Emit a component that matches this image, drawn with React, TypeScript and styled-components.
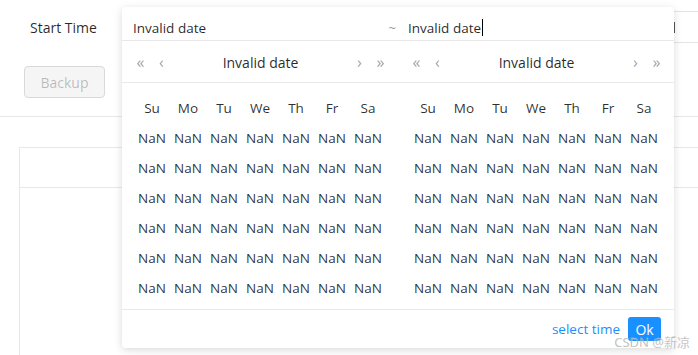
import React from "react";
import styled, { createGlobalStyle } from "styled-components";

const weekDays = ["Su", "Mo", "Tu", "We", "Th", "Fr", "Sa"];
const rows = Array.from({ length: 6 }, () => Array(7).fill("NaN"));

const GlobalStyle = createGlobalStyle`
  html, body {
    margin: 0;
    padding: 0;
    background: #fff;
    overflow: hidden;
  }
  body {
    font-family: "Open Sans", "Noto Sans", sans-serif;
    font-size: 13.5px;
    color: rgba(0, 0, 0, 0.85);
  }
`;

const App = () => {
  return (
    <Page>
      <GlobalStyle />
      <FormRow>
        <Label>Start Time</Label>
        <RangeInput>
          <InputGlyph />
        </RangeInput>
      </FormRow>
      <ActionRow>
        <DisabledButton disabled>Backup</DisabledButton>
      </ActionRow>
      <Divider />
      <TableBox>
        <TableHead />
        <TableBody />
      </TableBox>

      <Watermark>28929 28929</Watermark>

      <Dropdown>
        <InputRow>
          <InputHalf>
            Invalid date
            <Tilde>~</Tilde>
          </InputHalf>
          <InputHalf $right>
            Invalid date
            <Caret />
          </InputHalf>
        </InputRow>
        <Panels>
          {[0, 1].map((p) => (
            <Panel key={p}>
              <PanelHeader>
                <NavGroup>
                  <NavBtn>«</NavBtn>
                  <NavBtn>‹</NavBtn>
                </NavGroup>
                <HeaderTitle>Invalid date</HeaderTitle>
                <NavGroup $end>
                  <NavBtn>›</NavBtn>
                  <NavBtn>»</NavBtn>
                </NavGroup>
              </PanelHeader>
              <Grid>
                {weekDays.map((d) => (
                  <Cell key={d}>{d}</Cell>
                ))}
                {rows.map((r, i) =>
                  r.map((c, j) => <Cell key={`${i}-${j}`}>{c}</Cell>)
                )}
              </Grid>
            </Panel>
          ))}
        </Panels>
        <Footer>
          <TimeLink>select time</TimeLink>
          <OkButton>Ok</OkButton>
        </Footer>
      </Dropdown>

      <CsdnMark>CSDN @新凉</CsdnMark>
    </Page>
  );
};

const Page = styled.div`
  position: relative;
  width: 698px;
  height: 355px;
  overflow: hidden;
`;

const FormRow = styled.div`
  display: flex;
  align-items: center;
  padding: 11px 0 0 30px;
  height: 32px;
`;

const Label = styled.span`
  flex: 0 0 92px;
  font-size: 14px;
`;

const RangeInput = styled.div`
  position: relative;
  box-sizing: border-box;
  height: 32px;
  flex: 0 0 600px;
  border: 1px solid #e4e4e4;
  border-radius: 4px;
`;

const InputGlyph = styled.span`
  position: absolute;
  left: 551px;
  top: 10px;
  width: 1px;
  height: 11px;
  background: #555;
`;

const ActionRow = styled.div`
  display: flex;
  padding: 23px 0 0 24px;
`;

const DisabledButton = styled.button`
  box-sizing: border-box;
  width: 81px;
  height: 32px;
  border: 1px solid #d9d9d9;
  border-radius: 4px;
  background: #f5f5f5;
  color: rgba(0, 0, 0, 0.25);
  font-family: inherit;
  font-size: 14px;
  padding: 0;
`;

const Divider = styled.div`
  margin-top: 18px;
  height: 1px;
  background: #e8e8e8;
`;

const TableBox = styled.div`
  margin: 30px 0 0 19px;
  width: 720px;
  height: 240px;
  border: 1px solid #e8e8e8;
  border-right: none;
`;

const TableHead = styled.div`
  height: 39px;
  border-bottom: 1px solid #e8e8e8;
`;

const TableBody = styled.div`
  height: 200px;
`;

const Watermark = styled.div`
  position: absolute;
  left: 20px;
  top: 300px;
  transform: rotate(-45deg);
  transform-origin: left top;
  font-size: 28px;
  letter-spacing: 3px;
  color: rgba(0, 0, 0, 0.02);
  white-space: nowrap;
  pointer-events: none;
  z-index: 3;
`;

const Dropdown = styled.div`
  position: absolute;
  left: 122px;
  top: 7px;
  width: 552px;
  background: #fff;
  border-radius: 4px;
  box-shadow: 0 2px 8px rgba(0, 0, 0, 0.15);
  z-index: 2;
`;

const InputRow = styled.div`
  display: grid;
  grid-template-columns: 1fr 1fr;
  height: 34px;
  padding-top: 8px;
  box-sizing: border-box;
  border-bottom: 1px solid #e8e8e8;
`;

const InputHalf = styled.div<{ $right?: boolean }>`
  position: relative;
  display: flex;
  align-items: center;
  padding-left: ${(p) => (p.$right ? "10px" : "11px")};
  color: rgba(0, 0, 0, 0.85);
`;

const Tilde = styled.span`
  position: absolute;
  right: 2px;
  color: rgba(0, 0, 0, 0.45);
  font-size: 13px;
`;

const Caret = styled.span`
  display: inline-block;
  width: 1px;
  height: 17px;
  margin-left: 1px;
  background: #000;
`;

const Panels = styled.div`
  display: grid;
  grid-template-columns: 1fr 1fr;
`;

const Panel = styled.div`
  display: flex;
  flex-direction: column;
`;

const PanelHeader = styled.div`
  display: flex;
  align-items: center;
  justify-content: space-between;
  height: 40px;
  padding: 1px 11px 0 12px;
  border-bottom: 1px solid #e8e8e8;
`;

const NavGroup = styled.div<{ $end?: boolean }>`
  display: flex;
  justify-content: ${(p) => (p.$end ? "flex-end" : "flex-start")};
  gap: 8px;
  width: 36px;
`;

const NavBtn = styled.span`
  width: 13px;
  text-align: center;
  font-size: 16px;
  color: rgba(0, 0, 0, 0.4);
  line-height: 1;
`;

const HeaderTitle = styled.span`
  color: rgba(0, 0, 0, 0.85);
  font-size: 14px;
`;

const Grid = styled.div`
  display: grid;
  grid-template-columns: repeat(7, 36px);
  grid-auto-rows: 30px;
  padding: 10px 12px 6px;
`;

const Cell = styled.div`
  display: flex;
  align-items: center;
  justify-content: center;
  color: rgba(0, 0, 0, 0.82);
`;

const Footer = styled.div`
  display: flex;
  align-items: center;
  justify-content: flex-end;
  gap: 8px;
  height: 38px;
  padding-right: 13px;
  border-top: 1px solid #e8e8e8;
`;

const TimeLink = styled.span`
  color: #1890ff;
`;

const OkButton = styled.button`
  width: 33px;
  height: 24px;
  border: none;
  border-radius: 3px;
  background: #1890ff;
  color: #fff;
  font-family: inherit;
  font-size: 14px;
  padding: 0;
`;

const CsdnMark = styled.div`
  position: absolute;
  right: 8px;
  bottom: 4px;
  font-family: "Noto Sans", "Noto Sans CJK SC", sans-serif;
  font-size: 13px;
  color: rgba(150, 150, 150, 0.75);
  -webkit-text-stroke: 0.3px rgba(255, 255, 255, 0.6);
  z-index: 4;
`;

export default App;
